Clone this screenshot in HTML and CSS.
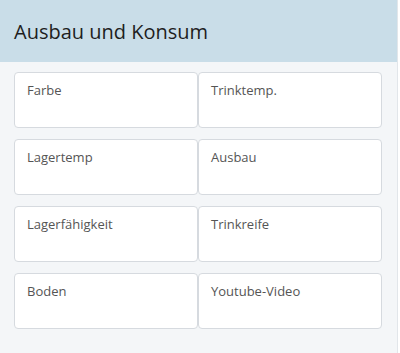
FILE: index.html
```html
<!DOCTYPE html>
<html lang="de">
<head>
    <meta charset="UTF-8">
    <meta name="viewport" content="width=device-width, initial-scale=1.0">
    <title>Ausbau und Konsum</title>
    <link rel="stylesheet" href="styles.css">
</head>
<body>

    <div class="panel">
        <div class="panel-header">
            <h2>Ausbau und Konsum</h2>
        </div>

        <div class="fields">
            <div class="field">Farbe</div>
            <div class="field">Trinktemp.</div>
            <div class="field">Lagertemp</div>
            <div class="field">Ausbau</div>
            <div class="field">Lagerfähigkeit</div>
            <div class="field">Trinkreife</div>
            <div class="field">Boden</div>
            <div class="field">Youtube-Video</div>
        </div>
    </div>

</body>
</html>
```

FILE: styles.css
```css
body {
    font-family: "Open Sans", "Noto Sans", sans-serif;
    background-color: #ffffff;
    margin: 0;
    padding: 0;
}
.panel {
    width: 397px;
    height: 353px;
    background: #f4f6f8;
    border-right: 1px solid #e2e6ea;
}
.panel-header {
    height: 62px;
    background: #c9dde8;
    display: flex;
    align-items: center;
    padding-left: 14px;
}
h2 {
    margin: 0;
    font-size: 20px;
    font-weight: normal;
    color: #1e1e1e;
}
.fields {
    display: grid;
    grid-template-columns: 184px 184px;
    column-gap: 0;
    row-gap: 11px;
    padding: 10px 0 0 14px;
}
.field {
    height: 56px;
    box-sizing: border-box;
    background: white;
    border: 1px solid #d6dadf;
    border-radius: 4px;
    padding: 8px 12px;
    font-size: 13px;
    color: #555;
}
```
